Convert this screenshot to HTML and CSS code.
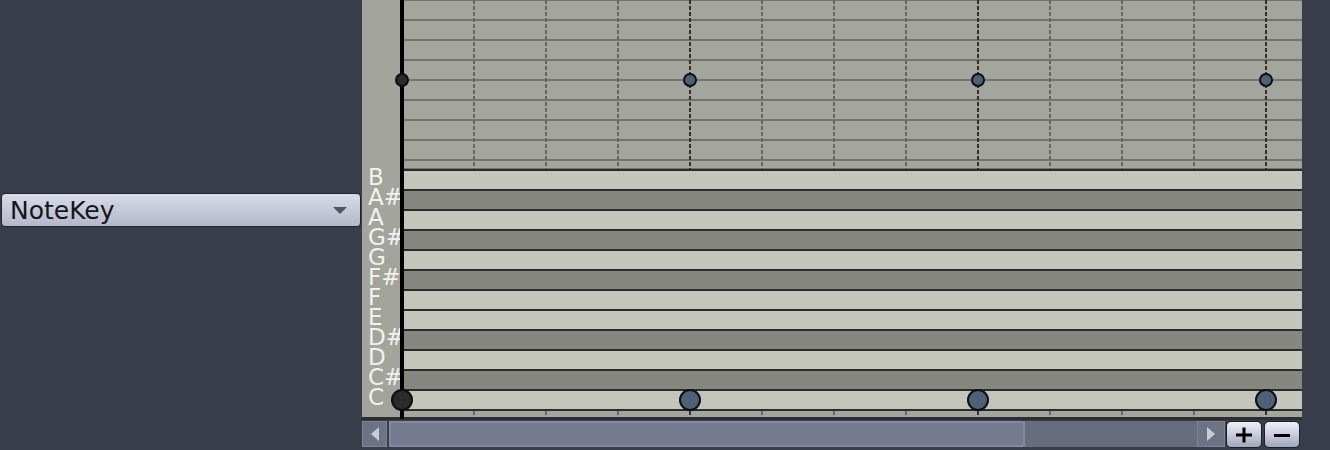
FILE: index.html
```html
<!DOCTYPE html>
<html>
<head>
<meta charset="utf-8">
<link rel="stylesheet" href="styles.css">
</head>
<body>
<div class="page">
  <div class="side">
    <div class="select">
      <span class="select-label">NoteKey</span>
      <span class="select-caret"></span>
    </div>
  </div>
  <div class="roll">
    <div class="roll-main">
      <div class="keys">
        <div class="key-label">B</div>
        <div class="key-label">A#</div>
        <div class="key-label">A</div>
        <div class="key-label">G#</div>
        <div class="key-label">G</div>
        <div class="key-label">F#</div>
        <div class="key-label">F</div>
        <div class="key-label">E</div>
        <div class="key-label">D#</div>
        <div class="key-label">D</div>
        <div class="key-label">C#</div>
        <div class="key-label">C</div>
      </div>
      <div class="grid">
        <div class="ctrl beats">
          <div class="beat"></div><div class="beat"></div><div class="beat"></div><div class="beat bar"></div>
          <div class="beat"></div><div class="beat"></div><div class="beat"></div><div class="beat bar"></div>
          <div class="beat"></div><div class="beat"></div><div class="beat"></div><div class="beat bar"></div>
        </div>
        <div class="key-rows">
          <div class="key-row white"></div>
          <div class="key-row black"></div>
          <div class="key-row white"></div>
          <div class="key-row black"></div>
          <div class="key-row white"></div>
          <div class="key-row black"></div>
          <div class="key-row white"></div>
          <div class="key-row white"></div>
          <div class="key-row black"></div>
          <div class="key-row white"></div>
          <div class="key-row black"></div>
          <div class="key-row white"></div>
        </div>
        <div class="strip beats">
          <div class="beat"></div><div class="beat"></div><div class="beat"></div><div class="beat bar"></div>
          <div class="beat"></div><div class="beat"></div><div class="beat"></div><div class="beat bar"></div>
          <div class="beat"></div><div class="beat"></div><div class="beat"></div><div class="beat bar"></div>
        </div>
      </div>
    </div>
    <div class="roll-sep"></div>
    <div class="hscroll">
      <div class="sb-btn sb-left">
        <svg width="10" height="14" viewBox="0 0 10 14"><path d="M9 0 L1 7 L9 14 Z" fill="#c9ccd8"/></svg>
      </div>
      <div class="sb-track"><div class="sb-thumb"></div></div>
      <div class="sb-btn sb-right">
        <svg width="10" height="14" viewBox="0 0 10 14"><path d="M1 0 L9 7 L1 14 Z" fill="#c9ccd8"/></svg>
      </div>
      <div class="zoom-btn">
        <svg width="18" height="16" viewBox="0 0 18 16"><path d="M1 8 H17 M9 0.5 V15.5" stroke="#000" stroke-width="3"/></svg>
      </div>
      <div class="zoom-btn">
        <svg width="18" height="16" viewBox="0 0 18 16"><path d="M1 8.5 H17" stroke="#000" stroke-width="3"/></svg>
      </div>
    </div>

    <div class="playhead"></div>

    <div class="dot small dark" style="left:33px;top:73px"></div>
    <div class="dot small" style="left:321px;top:73px"></div>
    <div class="dot small" style="left:609px;top:73px"></div>
    <div class="dot small" style="left:897px;top:73px"></div>

    <div class="dot big dark" style="left:29px;top:389px"></div>
    <div class="dot big" style="left:317px;top:389px"></div>
    <div class="dot big" style="left:605px;top:389px"></div>
    <div class="dot big" style="left:893px;top:389px"></div>
  </div>
</div>
</body>
</html>
```

FILE: styles.css
```css
* {
  box-sizing: border-box;
}

html, body {
  margin: 0;
  padding: 0;
}

body {
  background: #393d49;
  font-family: "DejaVu Sans", "Liberation Sans", sans-serif;
  overflow: hidden;
}

.page {
  display: flex;
  width: 1330px;
  height: 450px;
}

/* left side dropdown */
.side {
  width: 362px;
  flex: none;
  padding-top: 193px;
  padding-left: 1px;
}

.select {
  width: 360px;
  height: 34px;
  border: 1px solid #22252c;
  border-radius: 4px;
  background: linear-gradient(to bottom, #d8dbe8 0%, #c6c9d8 50%, #b4b8ca 100%);
  display: flex;
  align-items: center;
  justify-content: space-between;
  padding: 0 13px 0 8px;
}

.select-label {
  font-size: 25px;
  color: #141518;
  line-height: 1;
}

.select-caret {
  width: 0;
  height: 0;
  border-left: 7.5px solid transparent;
  border-right: 7.5px solid transparent;
  border-top: 7px solid #50545f;
  margin-top: 1px;
}

/* piano roll panel */
.roll {
  width: 940px;
  flex: none;
  position: relative;
  display: flex;
  flex-direction: column;
}

.roll-main {
  display: flex;
  height: 417px;
}

.keys {
  width: 38px;
  flex: none;
  background: #a3a49c;
  padding-top: 167px;
}

.key-label {
  height: 20px;
  line-height: 20px;
  font-size: 23px;
  color: #f1f1ee;
  padding-left: 6px;
  white-space: nowrap;
}

.grid {
  flex: 1;
  display: flex;
  flex-direction: column;
}

.beats {
  display: flex;
  padding-left: 3px;
}

.beat {
  width: 72px;
  flex: none;
  height: 100%;
  background: repeating-linear-gradient(to bottom, #656660 0 4px, transparent 4px 6px) right top / 2px 100% no-repeat;
}

.beat.bar {
  background: repeating-linear-gradient(to bottom, #30302e 0 4px, transparent 4px 6px) right top / 2px 100% no-repeat;
}

.ctrl {
  height: 169px;
  flex: none;
  background-color: #a4a59d;
  background-image: repeating-linear-gradient(to bottom, #73746e 0 2px, transparent 2px 20px);
  background-position: 0 -1px;
}

.key-rows {
  display: flex;
  flex-direction: column;
}

.key-row {
  height: 20px;
  border-top: 2px solid #2c2c2a;
}

.key-row.white {
  background: #c4c5bb;
}

.key-row.black {
  background: #868781;
}

.strip {
  height: 8px;
  flex: none;
  border-top: 2px solid #2c2c2a;
  background: #a4a59d;
}

.roll-sep {
  height: 3px;
  background: #2c2e34;
}

/* horizontal scrollbar */
.hscroll {
  height: 28px;
  display: flex;
  align-items: stretch;
  padding-top: 1px;
  background: #3b3e4a;
}

.sb-btn {
  display: flex;
  align-items: center;
  justify-content: center;
  background: #6d7285;
  border: 1px solid #7e8397;
  height: 26px;
}

.sb-left {
  width: 25px;
  margin-right: 2px;
}

.sb-right {
  width: 28px;
  margin-right: 1px;
}

.sb-track {
  flex: 1;
  height: 26px;
  background: #676c7f;
  display: flex;
}

.sb-thumb {
  width: 636px;
  height: 100%;
  background: #757b8f;
  border: 2px solid #848a9e;
}

.zoom-btn {
  width: 36px;
  height: 27px;
  margin-right: 2px;
  border: 1px solid #1d1f27;
  border-radius: 5px;
  background: linear-gradient(to bottom, #eef0fa 0%, #c9ccdc 50%, #a3a7bd 100%);
  display: flex;
  align-items: center;
  justify-content: center;
}

/* overlays */
.playhead {
  position: absolute;
  left: 38px;
  top: 0;
  width: 4px;
  height: 419px;
  background: #000;
}

.dot {
  position: absolute;
  border-radius: 50%;
  border: 2px solid #0e0f10;
  background: #4b6079;
}

.dot.small {
  width: 14px;
  height: 14px;
}

.dot.big {
  width: 22px;
  height: 22px;
}

.dot.dark {
  background: #2a2a2a;
}
```
